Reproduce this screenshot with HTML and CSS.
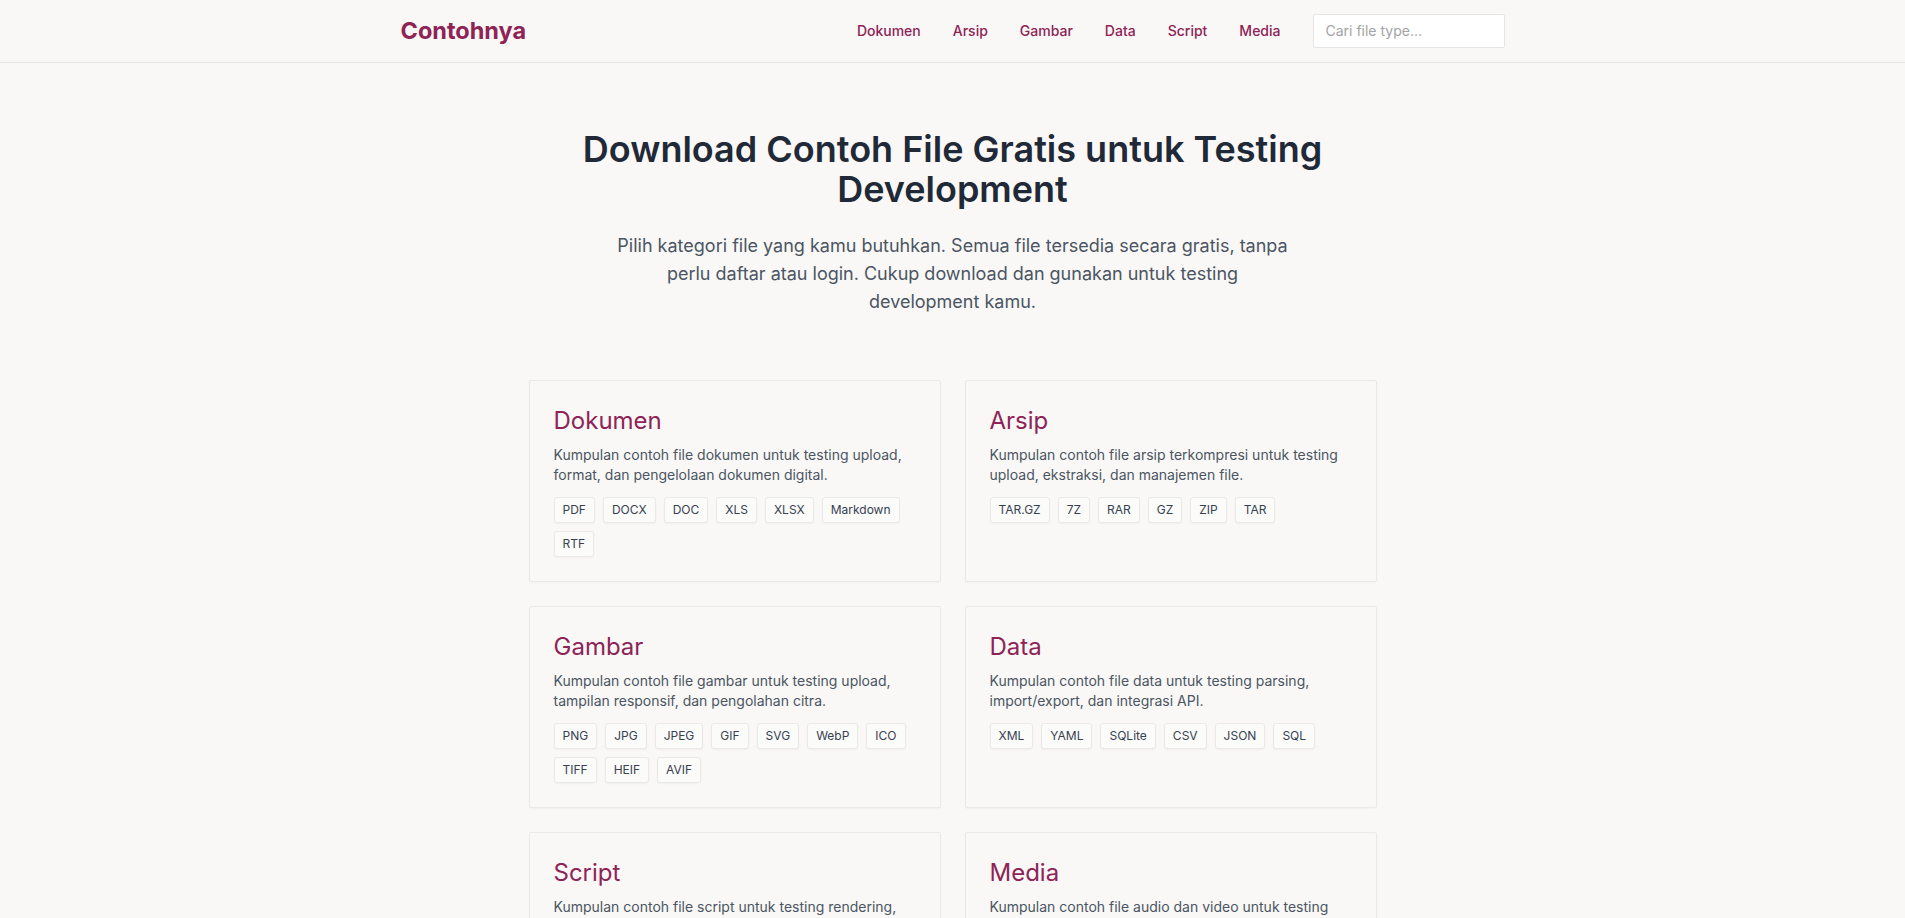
FILE: index.html
```html
<!DOCTYPE html>
<html lang="id">
<head>
    <meta charset="UTF-8">
    <meta name="viewport" content="width=device-width, initial-scale=1.0">
    <title>Contohnya - Download Contoh File Gratis</title>
    <link rel="stylesheet" href="styles.css">
</head>
<body>
    <!-- Header -->
    <header class="site-header">
        <div class="header-inner">
            <a href="/" class="brand">Contohnya</a>
            <nav class="nav">
                <a href="/dokumen" class="nav-link">Dokumen</a>
                <a href="/arsip" class="nav-link">Arsip</a>
                <a href="/gambar" class="nav-link">Gambar</a>
                <a href="/data" class="nav-link">Data</a>
                <a href="/script" class="nav-link">Script</a>
                <a href="/media" class="nav-link">Media</a>
                <input type="text" class="search-input" placeholder="Cari file type...">
            </nav>
        </div>
    </header>

    <main class="main">
        <!-- Hero -->
        <section class="hero">
            <h1 class="hero-title">Download Contoh File Gratis untuk Testing Development</h1>
            <p class="hero-text">Pilih kategori file yang kamu butuhkan. Semua file tersedia secara gratis, tanpa perlu daftar atau login. Cukup download dan gunakan untuk testing development kamu.</p>
        </section>

        <!-- Kategori -->
        <section class="category-grid">
            <div class="card">
                <h2 class="card-title"><a href="/dokumen">Dokumen</a></h2>
                <p class="card-desc">Kumpulan contoh file dokumen untuk testing upload, format, dan pengelolaan dokumen digital.</p>
                <div class="tags">
                    <a href="/dokumen/pdf" class="tag">PDF</a>
                    <a href="/dokumen/docx" class="tag">DOCX</a>
                    <a href="/dokumen/doc" class="tag">DOC</a>
                    <a href="/dokumen/xls" class="tag">XLS</a>
                    <a href="/dokumen/xlsx" class="tag">XLSX</a>
                    <a href="/dokumen/markdown" class="tag">Markdown</a>
                    <a href="/dokumen/rtf" class="tag">RTF</a>
                </div>
            </div>

            <div class="card">
                <h2 class="card-title"><a href="/arsip">Arsip</a></h2>
                <p class="card-desc">Kumpulan contoh file arsip terkompresi untuk testing upload, ekstraksi, dan manajemen file.</p>
                <div class="tags">
                    <a href="/arsip/tar-gz" class="tag">TAR.GZ</a>
                    <a href="/arsip/7z" class="tag">7Z</a>
                    <a href="/arsip/rar" class="tag">RAR</a>
                    <a href="/arsip/gz" class="tag">GZ</a>
                    <a href="/arsip/zip" class="tag">ZIP</a>
                    <a href="/arsip/tar" class="tag">TAR</a>
                </div>
            </div>

            <div class="card">
                <h2 class="card-title"><a href="/gambar">Gambar</a></h2>
                <p class="card-desc">Kumpulan contoh file gambar untuk testing upload, tampilan responsif, dan pengolahan citra.</p>
                <div class="tags">
                    <a href="/gambar/png" class="tag">PNG</a>
                    <a href="/gambar/jpg" class="tag">JPG</a>
                    <a href="/gambar/jpeg" class="tag">JPEG</a>
                    <a href="/gambar/gif" class="tag">GIF</a>
                    <a href="/gambar/svg" class="tag">SVG</a>
                    <a href="/gambar/webp" class="tag">WebP</a>
                    <a href="/gambar/ico" class="tag">ICO</a>
                    <a href="/gambar/tiff" class="tag">TIFF</a>
                    <a href="/gambar/heif" class="tag">HEIF</a>
                    <a href="/gambar/avif" class="tag">AVIF</a>
                </div>
            </div>

            <div class="card">
                <h2 class="card-title"><a href="/data">Data</a></h2>
                <p class="card-desc">Kumpulan contoh file data untuk testing parsing, import/export, dan integrasi API.</p>
                <div class="tags">
                    <a href="/data/xml" class="tag">XML</a>
                    <a href="/data/yaml" class="tag">YAML</a>
                    <a href="/data/sqlite" class="tag">SQLite</a>
                    <a href="/data/csv" class="tag">CSV</a>
                    <a href="/data/json" class="tag">JSON</a>
                    <a href="/data/sql" class="tag">SQL</a>
                </div>
            </div>

            <div class="card">
                <h2 class="card-title"><a href="/script">Script</a></h2>
                <p class="card-desc">Kumpulan contoh file script untuk testing rendering, eksekusi, dan syntax highlighting.</p>
                <div class="tags">
                    <a href="/script/js" class="tag">JS</a>
                    <a href="/script/css" class="tag">CSS</a>
                    <a href="/script/html" class="tag">HTML</a>
                    <a href="/script/py" class="tag">PY</a>
                    <a href="/script/php" class="tag">PHP</a>
                </div>
            </div>

            <div class="card">
                <h2 class="card-title"><a href="/media">Media</a></h2>
                <p class="card-desc">Kumpulan contoh file audio dan video untuk testing playback, streaming, dan konversi media.</p>
                <div class="tags">
                    <a href="/media/mp3" class="tag">MP3</a>
                    <a href="/media/mp4" class="tag">MP4</a>
                    <a href="/media/wav" class="tag">WAV</a>
                    <a href="/media/ogg" class="tag">OGG</a>
                    <a href="/media/webm" class="tag">WEBM</a>
                </div>
            </div>
        </section>
    </main>
</body>
</html>
```

FILE: styles.css
```css
* {
    margin: 0;
    padding: 0;
    box-sizing: border-box;
}

:root {
    --brand: #8e2356;
    --bg: #f9f8f6;
    --border: #e7e5e1;
    --text-dark: #1f2937;
    --text-muted: #4b5563;
}

body {
    background-color: var(--bg);
    color: var(--text-dark);
    font-family: Inter, "Noto Sans", Roboto, sans-serif;
}

a {
    text-decoration: none;
    color: inherit;
}

/* Header */
.site-header {
    border-bottom: 1px solid var(--border);
    background-color: var(--bg);
}

.header-inner {
    max-width: 1152px;
    margin: 0 auto;
    padding: 0 24px;
    height: 62px;
    display: flex;
    align-items: center;
    justify-content: space-between;
}

.brand {
    font-size: 23.5px;
    font-weight: 700;
    color: var(--brand);
    margin-top: -1px;
}

.nav {
    display: flex;
    align-items: center;
    gap: 32px;
    margin-top: -1px;
}

.nav-link {
    font-size: 14px;
    font-weight: 500;
    color: var(--brand);
}

.search-input {
    width: 192px;
    padding: 6px 12px;
    font-family: inherit;
    font-size: 14px;
    line-height: 20px;
    border: 1px solid #e5e5e5;
    background-color: #fff;
    border-radius: 2px;
    outline: none;
    color: var(--text-dark);
}

.search-input::placeholder {
    color: #a3a3a3;
}

/* Main */
.main {
    max-width: 896px;
    margin: 0 auto;
    padding: 0 24px 48px;
}

.hero {
    padding: 66px 0 64px;
    text-align: center;
}

.hero-title {
    font-size: 36px;
    line-height: 40px;
    font-weight: 600;
    color: var(--text-dark);
    max-width: 768px;
    margin: 0 auto 23px;
}

.hero-text {
    max-width: 672px;
    margin: 0 auto;
    font-size: 18px;
    line-height: 28px;
    color: var(--text-muted);
}

/* Category cards */
.category-grid {
    display: grid;
    grid-template-columns: 1fr 1fr;
    gap: 24px;
}

.card {
    border: 1px solid #ebe9e5;
    border-radius: 2px;
    padding: 24px;
    background-color: var(--bg);
    box-shadow: 0 1px 2px rgba(0, 0, 0, 0.03);
}

.card-title {
    font-size: 24px;
    line-height: 32px;
    font-weight: 400;
    color: var(--brand);
    margin-bottom: 8px;
}

.card-desc {
    font-size: 14px;
    line-height: 20px;
    color: var(--text-muted);
}

.tags {
    display: flex;
    flex-wrap: wrap;
    gap: 8px;
    margin-top: 12px;
}

.tag {
    font-size: 12px;
    line-height: 16px;
    padding: 4px 8px;
    border: 1px solid #ebe9e5;
    border-radius: 3px;
    background-color: #fbfbfa;
    color: #374151;
    box-shadow: 0 1px 2px rgba(0, 0, 0, 0.04);
}
```
